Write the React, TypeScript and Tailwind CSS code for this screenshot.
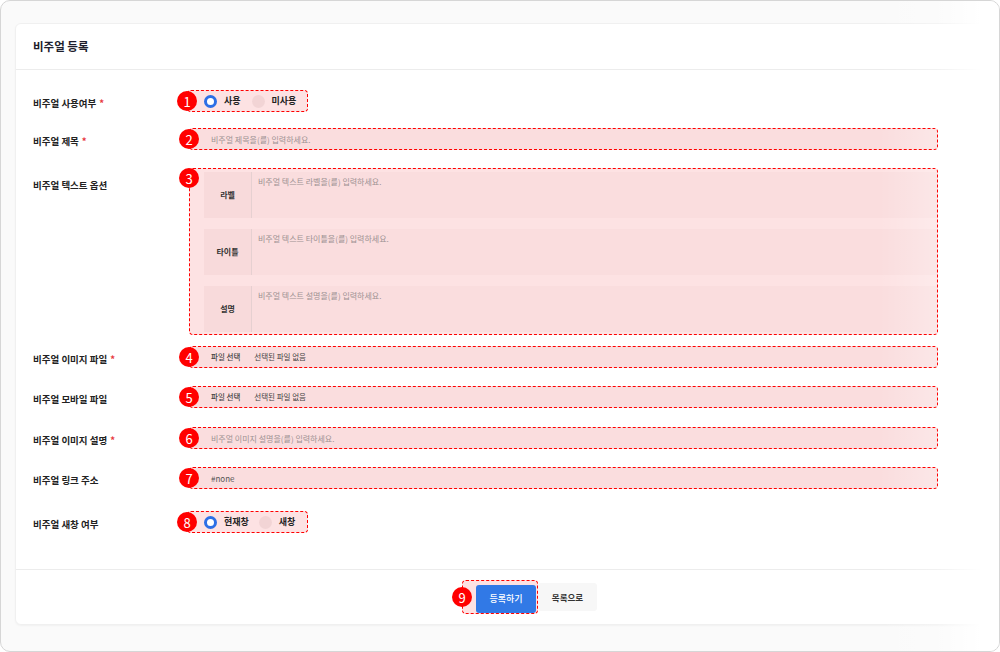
import React from 'react';

const font = { fontFamily: '"Noto Sans CJK KR", "Noto Sans", sans-serif' };

// 빨간 점선 하이라이트 + 번호 마커
const Mark = ({
  n,
  wrap = '',
  className = '',
  top = false,
  children,
}: {
  n: number;
  wrap?: string;
  className?: string;
  top?: boolean;
  children?: React.ReactNode;
}) => (
  <div className={`relative ${wrap}`}>
    <div className="absolute inset-0 rounded-[4px] bg-[#fde2e3]" />
    <div className={`relative ${className}`}>{children}</div>
    <div className="pointer-events-none absolute inset-0 z-20 rounded-[4px] border border-dashed border-[#ff0000]" />
    <span
      className={`absolute left-[-10px] z-30 flex h-[20px] w-[20px] items-center justify-center rounded-full bg-[#ff0000] text-[13px] leading-none text-white ${
        top ? 'top-0' : 'top-1/2 -translate-y-1/2'
      }`}
    >
      {n}
    </span>
  </div>
);

const Label = ({ text, required }: { text: string; required?: boolean }) => (
  <div className="w-[156px] shrink-0 pt-[5px] text-[9.5px] font-bold text-[#222]">
    {text}
    {required && <span className="ml-[3px] text-[#e8383d]">*</span>}
  </div>
);

const Radio = ({ checked, label }: { checked?: boolean; label: string }) => (
  <div className="flex items-center gap-[7px]">
    {checked ? (
      <span className="h-[13px] w-[13px] rounded-full border-[3px] border-[#2d6fe6] bg-white" />
    ) : (
      <span className="h-[13px] w-[13px] rounded-full bg-[rgba(60,0,0,0.06)]" />
    )}
    <span className="text-[9px] font-bold text-[#222]">{label}</span>
  </div>
);

const TextInput = ({ placeholder, value }: { placeholder?: string; value?: string }) => (
  <div className="flex h-[22px] items-center rounded-[4px] bg-[rgba(120,0,0,0.02)] pl-[22px] pt-[2px] text-[8px]">
    {value ? (
      <span className="text-[#555]">{value}</span>
    ) : (
      <span className="text-[#9c9192]">{placeholder}</span>
    )}
  </div>
);

const FileInput = () => (
  <div className="flex h-[22px] items-center gap-[14px] rounded-[4px] bg-[rgba(120,0,0,0.02)] pl-[22px] text-[7.5px] text-[#444]">
    <span className="font-medium">파일 선택</span>
    <span>선택된 파일 없음</span>
  </div>
);

const textOptions = [
  { label: '라벨', placeholder: '비주얼 텍스트 라벨을(를) 입력하세요.' },
  { label: '타이틀', placeholder: '비주얼 텍스트 타이틀을(를) 입력하세요.' },
  { label: '설명', placeholder: '비주얼 텍스트 설명을(를) 입력하세요.' },
];

export default function App() {
  return (
    <div
      style={font}
      className="relative h-[652px] w-[1000px] overflow-hidden rounded-[10px] border border-[#d6d6d6] bg-[#fafafa] pl-[14px] pt-[22px]"
    >
      <div className="w-[970px] rounded-[6px] border border-[#f0f0f0] bg-white shadow-[0_1px_2px_rgba(0,0,0,0.04)]">
        {/* 헤더 */}
        <div className="flex h-[46px] items-center border-b border-[#ececec] px-[17px]">
          <h1 className="text-[11.5px] font-bold text-[#1e1e2d]">비주얼 등록</h1>
        </div>

        {/* 폼 */}
        <div className="flex flex-col pb-[36px] pl-[17px] pr-[46px] pt-[20px]">
          <div className="flex items-center">
            <Label text="비주얼 사용여부" required />
            <Mark n={1} wrap="-ml-[2px] w-[121px]" className="flex h-[22px] items-center gap-[11px] pl-[17px]">
              <Radio checked label="사용" />
              <Radio label="미사용" />
            </Mark>
          </div>

          <div className="mt-[16px] flex items-center">
            <Label text="비주얼 제목" required />
            <Mark n={2} wrap="flex-1">
              <TextInput placeholder="비주얼 제목을(를) 입력하세요." />
            </Mark>
          </div>

          <div className="mt-[18px] flex items-start">
            <div className="pt-[5px]">
              <Label text="비주얼 텍스트 옵션" />
            </div>
            <Mark n={3} top wrap="flex-1" className="flex h-[167px] flex-col gap-[11px] pl-[15px] pt-[4px]">
              {textOptions.map((o) => (
                <div key={o.label} className="flex h-[46px]">
                  <div className="flex w-[48px] items-center justify-center border-r border-[#e6d0d1] bg-[rgba(100,0,0,0.035)] text-[8px] font-bold text-[#333]">
                    {o.label}
                  </div>
                  <div className="flex-1 bg-[rgba(120,0,0,0.02)] pl-[6px] pt-[4px] text-[8px] text-[#9c9192]">
                    {o.placeholder}
                  </div>
                </div>
              ))}
            </Mark>
          </div>

          <div className="mt-[11px] flex items-center">
            <Label text="비주얼 이미지 파일" required />
            <Mark n={4} wrap="flex-1">
              <FileInput />
            </Mark>
          </div>

          <div className="mt-[18px] flex items-center">
            <Label text="비주얼 모바일 파일" />
            <Mark n={5} wrap="flex-1">
              <FileInput />
            </Mark>
          </div>

          <div className="mt-[19px] flex items-center">
            <Label text="비주얼 이미지 설명" required />
            <Mark n={6} wrap="flex-1">
              <TextInput placeholder="비주얼 이미지 설명을(를) 입력하세요." />
            </Mark>
          </div>

          <div className="mt-[18px] flex items-center">
            <Label text="비주얼 링크 주소" />
            <Mark n={7} wrap="flex-1">
              <TextInput value="#none" />
            </Mark>
          </div>

          <div className="mt-[22px] flex items-center">
            <Label text="비주얼 새창 여부" />
            <Mark n={8} wrap="-ml-[2px] w-[121px]" className="flex h-[22px] items-center gap-[10px] pl-[17px]">
              <Radio checked label="현재창" />
              <Radio label="새창" />
            </Mark>
          </div>
        </div>

        {/* 하단 버튼 */}
        <div className="flex h-[55px] items-center justify-center border-t border-[#ececec] pl-[59px]">
          <Mark n={9} className="pb-[1px] pl-[14px] pr-[2px] pt-[3px]">
            <button className="h-[28px] w-[60px] rounded-[3px] bg-[#3179e6] text-[9px] font-medium text-white">
              등록하기
            </button>
          </Mark>
          <button className="h-[28px] w-[59px] rounded-[3px] bg-[#f7f7f7] text-[8.5px] font-bold text-[#333]">
            목록으로
          </button>
        </div>
      </div>

      {/* 오른쪽 페이드 */}
      <div className="pointer-events-none absolute inset-y-0 right-0 z-10 w-[120px] bg-[linear-gradient(to_right,rgba(255,255,255,0)_0%,rgba(255,255,255,0.3)_50%,#ffffff_85%)]" />
    </div>
  );
}
